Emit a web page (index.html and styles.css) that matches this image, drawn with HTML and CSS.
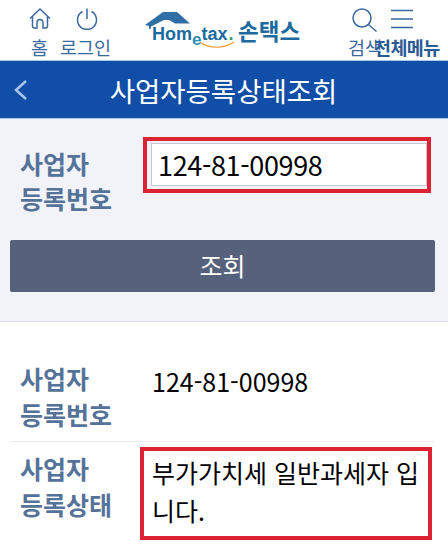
FILE: index.html
```html
<!DOCTYPE html>
<html lang="ko">
<head>
<meta charset="utf-8">
<title>사업자등록상태조회</title>
<link rel="stylesheet" href="styles.css">
</head>
<body>
<header class="top">
  <a class="nav nav-home">
    <svg class="ico" width="22" height="21" viewBox="0 0 22 21"><path d="M1 10.500 11 1l10 9.500M3.500 8.500V18a2 2 0 0 0 2 2H8v-5.500a3 3 0 0 1 6 0V20h2.500a2 2 0 0 0 2-2V8.500"/></svg>
    <span>홈</span>
  </a>
  <a class="nav nav-login">
    <svg class="ico" width="22" height="21" viewBox="0 0 22 21"><path d="M11 0.500V11M6.500 3.500a9.500 9.500 0 1 0 9 0"/></svg>
    <span>로그인</span>
  </a>
  <div class="logo">
    <svg class="roof" width="48" height="18" viewBox="0 0 48 18"><path class="roof-fill" d="M0 14 18 1h14l13 11.500H30L24 9H19L6 15.500 5.500 18H4V15z"/></svg>
    <span class="brand">Hom<span class="brand-e">e</span>tax<span class="dot">.</span></span>
    <span class="sontax">손택스</span>
    <svg class="swoosh" width="36" height="8" viewBox="0 0 36 8"><path d="M1 1c9 7 24 7 34 0"/></svg>
  </div>
  <a class="nav nav-search">
    <svg class="ico" width="27" height="24" viewBox="0 0 27 24"><circle cx="11" cy="10" r="9"/><path d="m17.500 16.500 8 7"/></svg>
    <span>검색</span>
  </a>
  <a class="nav nav-menu">
    <svg class="ico" width="22" height="20" viewBox="0 0 22 20"><path d="M0 1.500h22M0 10h22M0 18.500h22"/></svg>
    <span class="menu-label">전체메뉴</span>
  </a>
</header>
<div class="titlebar">
  <svg class="back" width="16" height="22" viewBox="0 0 16 22"><path d="M13 2 3 11l10 9"/></svg>
  <h1>사업자등록상태조회</h1>
</div>
<section class="form">
  <div class="form-row">
    <label class="lbl">사업자<br>등록번호</label>
    <div class="mark mark-input"><input class="inp" value="124-81-00998"></div>
  </div>
  <button class="btn">조회</button>
</section>
<section class="result">
  <div class="row row-first">
    <div class="lbl">사업자<br>등록번호</div>
    <div class="val val-plain">124-81-00998</div>
  </div>
  <div class="row row-second">
    <div class="lbl">사업자<br>등록상태</div>
    <div class="mark mark-val"><div class="val">부가가치세 일반과세자 입니다.</div></div>
  </div>
</section>
</body>
</html>
```
FILE: styles.css
```css
* { box-sizing: border-box; }
html, body { margin: 0; padding: 0; }
body { width: 448px; height: 556px; overflow: hidden; background: #fff; font-family: "Noto Sans CJK KR", "Noto Sans", sans-serif; color: #000; }

.top { height: 60px; display: flex; align-items: flex-start; padding: 8px 0 0 29px; background: #fff; }
.nav { display: flex; flex-direction: column; align-items: flex-start; flex: none; color: #3a689f; font-size: 18.500px; line-height: 26px; white-space: nowrap; }
.ico { fill: none; stroke: #3a689f; stroke-width: 1.500; display: block; flex: none; overflow: visible; }
.nav-home { width: 22px; }
.nav-home span { margin-left: 2px; }
.nav-home .ico { margin-bottom: 5px; }
.nav-login { width: 52px; margin-left: 9px; }
.nav-login .ico { margin: 0 0 5px 16px; }
.nav-search { width: 36px; margin-left: 43px; }
.nav-search .ico { margin: 0 0 2px 3px; }
.nav-menu { width: 67px; margin-left: -10px; }
.nav-menu .ico { margin: 1px 0 5px 17px; }
.menu-label { font-weight: 700; letter-spacing: -0.600px; color: #2b5a94; }

.logo { position: relative; flex: none; width: 160px; height: 44px; margin: 3px 0 0 33px; }
.roof { position: absolute; left: 0; top: 0; }
.roof-fill { fill: #2f6fa5; }
.brand { position: absolute; left: 7px; top: 12px; font-family: "Liberation Sans", sans-serif; font-weight: 700; font-size: 18px; line-height: 22px; color: #1c6aa0; }
.brand-e { font-size: 17px; position: relative; top: 5px; color: #2a8fb8; }
.dot { color: #2f9e55; margin-left: 1px; }
.sontax { position: absolute; left: 93px; top: 4px; font-size: 22.500px; line-height: 30px; font-weight: 700; color: #1c6aa0; }
.swoosh { position: absolute; left: 54px; top: 30px; fill: none; stroke: #ef9b2b; stroke-width: 1.200; }

.titlebar { height: 58px; background: #114ea8; border-top: 1px solid #a9c6e6; position: relative; display: flex; align-items: center; justify-content: center; }
.titlebar h1 { margin: 0 0 0 -1px; font-size: 27.500px; font-weight: 400; color: #fff; letter-spacing: 0; line-height: 36px; }
.back { position: absolute; left: 13px; top: 18px; fill: none; stroke: #a9c4e8; stroke-width: 2.500; }

.form { background: #f1f3f9; height: 204px; padding: 18px 13px 0 10px; border-top: 1px solid #a9c6e6; border-bottom: 1px solid #dcdfe6; }
.form-row { display: flex; height: 103px; padding-left: 10px; }
.lbl { font-size: 25px; font-weight: 700; line-height: 35px; color: #557299; width: 123px; flex: none; padding-top: 9px; }
.mark { border: 4px solid #dd2233; flex: none; }
.mark-input { width: 288px; height: 56px; padding: 2px 0 0 4px; }
.inp { display: block; width: 276px; height: 43px; border: 1px solid #c3c8d2; background: #fff; font: 400 27px/40px "Noto Sans CJK KR", "Noto Sans", sans-serif; color: #000; padding: 0 6px; outline: none; letter-spacing: -0.350px; }
.btn { display: block; width: 425px; height: 52px; border: 0; border-radius: 2px; background: #56627c; color: #fff; font: 400 25px/36px "Noto Sans CJK KR", sans-serif; padding: 0 0 2px; }

.result { padding: 38px 13px 0 10px; }
.row { display: flex; padding-left: 10px; }
.row .lbl { padding-top: 0; line-height: 36px; }
.row-first { height: 82px; border-bottom: 1px solid #ebebeb; }
.val { font-size: 25px; line-height: 38px; word-break: break-all; }
.val-plain { margin: 3px 0 0 9px; line-height: 36px; }
.row-second { padding-top: 5px; }
.row-second .lbl { width: 120px; padding-top: 3px; }
.mark-val { width: 292px; height: 93px; padding: 2px 6px 0 8px; }
```
